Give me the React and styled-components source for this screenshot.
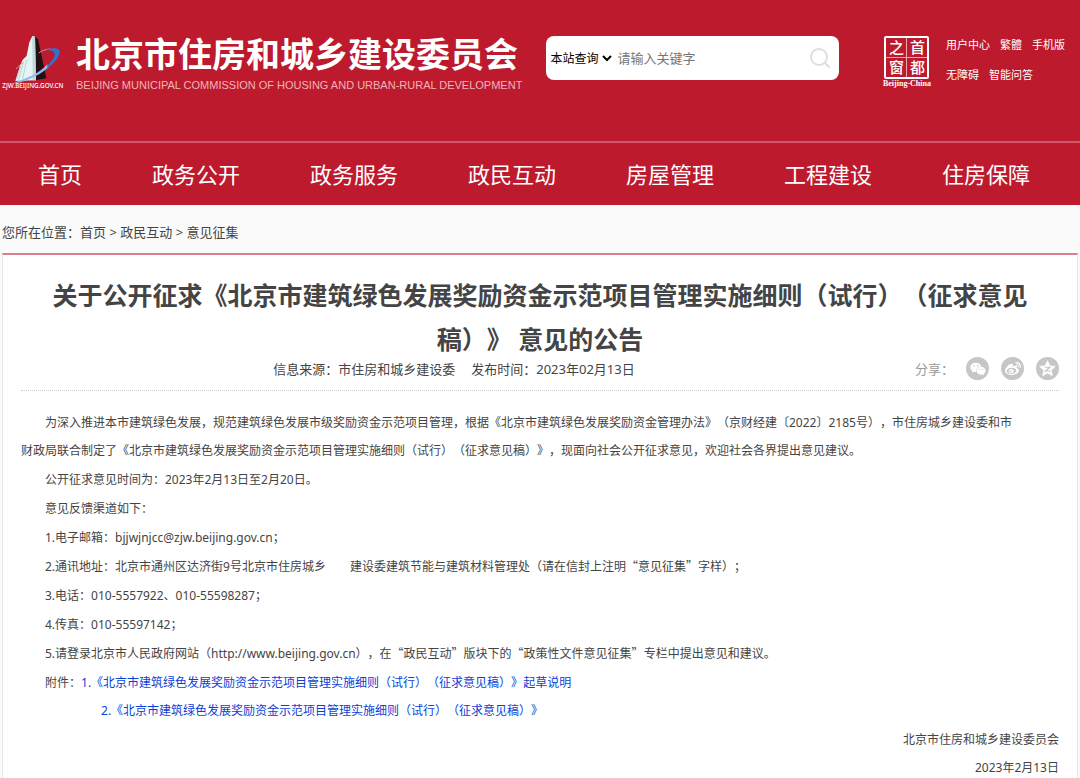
import React, { useState } from 'react';
import styled, { createGlobalStyle } from 'styled-components';
import { FaWeixin, FaWeibo } from 'react-icons/fa';

const navItems = [
    '首页',
    '政务公开',
    '政务服务',
    '政民互动',
    '房屋管理',
    '工程建设',
    '住房保障',
];

const docName = '《北京市建筑绿色发展奖励资金示范项目管理实施细则（试行）（征求意见稿）》';

const SiteLogo = () => (
    <svg width='66' height='58' viewBox='0 24 198 174' aria-hidden='true'>
        <path d='M101 33 L114 42 L139 160 L106 166 Z' fill='#241014' />
        <path
            d='M97 33 L105 35 L108 166 L46 168 L60 122 L68 104 L80 92 L88 52 Z'
            fill='#e6f3f3'
        />
        <path d='M97 33 L105 35 L108 166 L98 166 L97 60 Z' fill='#c2d9dc' />
        <path
            d='M70 112 L56 164 M62 124 L50 162 M80 104 L68 162'
            stroke='#a3c0c6'
            strokeWidth='2'
            fill='none'
        />
        <path
            d='M48 132 C54 124 60 120 70 112 M116 84 C126 76 138 73 150 72'
            stroke='#e08f95'
            strokeWidth='3'
            fill='none'
        />
        <path
            d='M128 77 C160 65 181 68 179 82 C176 106 138 140 104 153 C112 144 130 136 142 122 C160 106 168 90 162 82 C158 76 146 75 128 77 Z'
            fill='#2f74cc'
        />
        <path
            d='M142 118 C118 146 84 158 36 176 C66 174 112 156 142 130 Z'
            fill='#8fbcec'
        />
        <text
            x='7'
            y='190'
            fill='#fff'
            fontFamily='"Noto Sans", sans-serif'
            fontWeight='500'
            fontSize='19'
        >
            ZJW.BEIJING.GOV.CN
        </text>
    </svg>
);

const SearchIcon = () => (
    <svg width='22' height='22' viewBox='0 0 22 22' fill='none' stroke='#dedede'>
        <circle cx='10' cy='10' r='8' strokeWidth='2' />
        <path d='M16 16 L20 20' strokeWidth='2' strokeLinecap='round' />
    </svg>
);

const QzoneIcon = () => (
    <svg width='17' height='17' viewBox='0 0 24 24'>
        <path
            d='M12 1 L15.3 8.2 L23 9.1 L17.3 14.5 L18.8 22.2 L12 18.4 L5.2 22.2 L6.7 14.5 L1 9.1 L8.7 8.2 Z'
            fill='#fff'
            stroke='#fff'
            strokeLinejoin='round'
        />
        <path
            d='M8 10.2 H15.5 L9 15.6 H16.6'
            fill='none'
            stroke='#c6c6c6'
            strokeWidth='1.6'
        />
    </svg>
);

const App = () => {
    const [scope, setScope] = useState('site');
    const [keyword, setKeyword] = useState('');

    return (
        <>
            <GlobalStyle />
            <Header>
                <Banner>
                    <Brand href='#'>
                        <SiteLogo />
                        <BrandText>
                            <strong>北京市住房和城乡建设委员会</strong>
                            <small>
                                BEIJING MUNICIPAL COMMISSION OF HOUSING AND
                                URBAN-RURAL DEVELOPMENT
                            </small>
                        </BrandText>
                    </Brand>
                    <SearchBox onSubmit={(e) => e.preventDefault()}>
                        <select
                            aria-label='查询范围'
                            value={scope}
                            onChange={(e) => setScope(e.target.value)}
                        >
                            <option value='site'>本站查询</option>
                        </select>
                        <input
                            type='text'
                            aria-label='关键字'
                            placeholder='请输入关键字'
                            value={keyword}
                            onChange={(e) => setKeyword(e.target.value)}
                        />
                        <button type='submit' aria-label='搜索'>
                            <SearchIcon />
                        </button>
                    </SearchBox>
                    <Capital href='#'>
                        <Seal>
                            <span>之</span>
                            <span>首</span>
                            <span>窗</span>
                            <span>都</span>
                        </Seal>
                        <SealName>Beijing-China</SealName>
                    </Capital>
                    <QuickLinks>
                        <div>
                            <a href='#'>用户中心</a>
                            <a href='#'>繁體</a>
                            <a href='#'>手机版</a>
                        </div>
                        <div>
                            <a href='#'>无障碍</a>
                            <a href='#'>智能问答</a>
                        </div>
                    </QuickLinks>
                </Banner>
                <Nav>
                    {navItems.map((item) => (
                        <a href='#' key={item}>
                            {item}
                        </a>
                    ))}
                </Nav>
            </Header>
            <Breadcrumb>
                您所在位置：<a href='#'>首页</a> &gt; <a href='#'>政民互动</a>{' '}
                &gt; <a href='#'>意见征集</a>
            </Breadcrumb>
            <Article>
                <Title>关于公开征求{docName} 意见的公告</Title>
                <MetaRow>
                    <Meta>
                        <span>信息来源：市住房和城乡建设委</span>
                        <span>发布时间：2023年02月13日</span>
                    </Meta>
                    <Share>
                        <span>分享：</span>
                        <ShareButton aria-label='微信'>
                            <FaWeixin size={16} />
                        </ShareButton>
                        <ShareButton aria-label='微博'>
                            <FaWeibo size={16} />
                        </ShareButton>
                        <ShareButton aria-label='QQ空间'>
                            <QzoneIcon />
                        </ShareButton>
                    </Share>
                </MetaRow>
                <Content>
                    <p>
                        为深入推进本市建筑绿色发展，规范建筑绿色发展市级奖励资金示范项目管理，根据《北京市建筑绿色发展奖励资金管理办法》（京财经建〔2022〕2185号），市住房城乡建设委和市
                        <br />
                        财政局联合制定了{docName}，现面向社会公开征求意见，欢迎社会各界提出意见建议。
                    </p>
                    <p>公开征求意见时间为：2023年2月13日至2月20日。</p>
                    <p>意见反馈渠道如下：</p>
                    <p>1.电子邮箱：bjjwjnjcc@zjw.beijing.gov.cn；</p>
                    <p>
                        2.通讯地址：北京市通州区达济街9号北京市住房城乡　　建设委建筑节能与建筑材料管理处（请在信封上注明
                        <Quoted>“意见征集”</Quoted>字样）；
                    </p>
                    <p>3.电话：010-5557922、010-55598287；</p>
                    <p>4.传真：010-55597142；</p>
                    <p>
                        5.请登录北京市人民政府网站（http://www.beijing.gov.cn），在
                        <Quoted>“政民互动”</Quoted>版块下的
                        <Quoted>“政策性文件意见征集”</Quoted>
                        专栏中提出意见和建议。
                    </p>
                    <Attachments>
                        <span>附件：</span>
                        <ul>
                            <li>
                                <a href='#'>1.{docName}起草说明</a>
                            </li>
                            <li>
                                <a href='#'>2.{docName}</a>
                            </li>
                        </ul>
                    </Attachments>
                    <Signature>
                        <div>北京市住房和城乡建设委员会</div>
                        <div>2023年2月13日</div>
                    </Signature>
                </Content>
            </Article>
        </>
    );
};

const GlobalStyle = createGlobalStyle`
    * {
        box-sizing: border-box;
    }
    html {
        scrollbar-width: none;
    }
    body {
        margin: 0;
        background: #fafafa;
        color: #444;
        font-family: 'Noto Sans', 'Noto Sans CJK SC', sans-serif;
        font-size: 13px;
        text-spacing-trim: space-all;
    }
    a {
        color: inherit;
        text-decoration: none;
    }
    p, h1, ul {
        margin: 0;
        padding: 0;
    }
    button, input, select {
        font-family: inherit;
    }
`;

const Header = styled.header`
    background: #bd1a2d;
    color: #fff;
`;

const Banner = styled.div`
    display: flex;
    align-items: flex-start;
    height: 141px;
    padding: 33px 15px 0 0;
`;

const Brand = styled.a`
    display: flex;
    gap: 10px;
`;

const BrandText = styled.div`
    display: flex;
    flex-direction: column;
    white-space: nowrap;

    strong {
        font-size: 34px;
        line-height: 42px;
    }
    small {
        color: #f0b4ba;
        font-family: 'Liberation Sans', sans-serif;
        font-size: 11px;
        line-height: 20px;
    }
`;

const SearchBox = styled.form`
    display: flex;
    align-items: center;
    flex: 0 1 293px;
    height: 44px;
    margin: 3px 0 0 24px;
    padding-right: 8px;
    border-radius: 8px;
    background: #fff;

    select {
        border: none;
        background: transparent;
        color: #000;
        font-size: 12px;
    }
    input {
        flex: 1;
        min-width: 0;
        border: none;
        outline: none;
        background: transparent;
        font-size: 13px;

        &::placeholder {
            color: #757575;
        }
    }
    button {
        display: flex;
        padding: 0;
        border: none;
        background: none;
    }
`;

const Capital = styled.a`
    display: flex;
    flex-direction: column;
    align-items: center;
    margin: 3px 0 0 auto;
`;

const Seal = styled.div`
    display: grid;
    grid-template-columns: 1fr 1fr;
    gap: 1px;
    width: 45px;
    height: 43px;
    border: 2px solid #fff;
    border-radius: 2px;
    background: #e9a9af;

    span {
        background: #bd1a2d;
        font-size: 15px;
        font-weight: 500;
        line-height: 19px;
        text-align: center;
    }
`;

const SealName = styled.span`
    font-family: 'Liberation Serif', serif;
    font-size: 8px;
    font-weight: bold;
    line-height: 10px;
`;

const QuickLinks = styled.div`
    margin-left: 15px;
    font-size: 11px;
    line-height: 30px;
    margin-top: -3px;
    white-space: nowrap;

    div {
        display: flex;
        gap: 10px;
    }
`;

const Nav = styled.nav`
    display: flex;
    padding: 0 3px;
    border-top: 2px solid #d0576a;

    a {
        padding: 0 35px;
        font-size: 22px;
        line-height: 62px;
        white-space: nowrap;
    }
`;

const Breadcrumb = styled.div`
    padding: 17px 2px 11px;
    line-height: 20px;
`;

const Article = styled.main`
    margin: 0 2px;
    padding: 18px 18px 24px;
    border: 1px solid #e8e8e8;
    border-top: 2px solid #dc7f8b;
    background: #fff;
`;

const Title = styled.h1`
    padding: 0 24px;
    font-size: 25px;
    line-height: 44px;
    text-align: center;
`;

const MetaRow = styled.div`
    display: flex;
    align-items: center;
    height: 30px;
    padding-bottom: 14px;
    border-bottom: 1px dotted #ccc;
    line-height: 16px;
`;

const Meta = styled.div`
    display: flex;
    flex: 1;
    justify-content: center;
    gap: 16px;
`;

const Share = styled.div`
    display: flex;
    align-items: center;
    gap: 12px;
    padding-left: 28px;
    color: #999;
`;

const ShareButton = styled.button`
    display: flex;
    align-items: center;
    justify-content: center;
    width: 23px;
    height: 23px;
    padding: 0;
    border: none;
    border-radius: 50%;
    background: #c6c6c6;
    color: #fff;
`;

const Content = styled.div`
    display: flex;
    flex-direction: column;
    gap: 1px;
    padding-top: 18px;
    font-size: 12px;
    line-height: 28px;

    p {
        text-indent: 2em;
    }
`;

/* curly quotes take a full em in the CJK face */
const Quoted = styled.span`
    font-family: 'Noto Sans CJK SC', sans-serif;
    line-height: 1;
`;

const Attachments = styled.div`
    display: flex;
    padding-left: 2em;

    ul {
        list-style: none;
    }
    li + li {
        padding-left: 20px;
    }
    a {
        color: #0b3fd6;
    }
`;

const Signature = styled.div`
    text-align: right;
`;

export default App;
